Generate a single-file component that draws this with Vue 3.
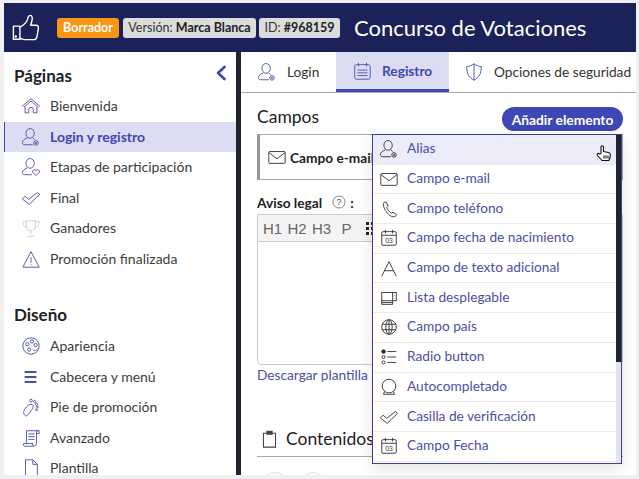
<script setup>
const pages = [
  { t: 'Bienvenida', i: 'home' },
  { t: 'Login y registro', i: 'user', active: true },
  { t: 'Etapas de participación', i: 'userh' },
  { t: 'Final', i: 'check' },
  { t: 'Ganadores', i: 'trophy' },
  { t: 'Promoción finalizada', i: 'warn' }
]
const design = [
  { t: 'Apariencia', i: 'palette' },
  { t: 'Cabecera y menú', i: 'menu' },
  { t: 'Pie de promoción', i: 'foot' },
  { t: 'Avanzado', i: 'scroll' },
  { t: 'Plantilla', i: 'file' }
]
const menu = [
  { t: 'Alias', i: 'user', hover: true },
  { t: 'Campo e-mail', i: 'mail' },
  { t: 'Campo teléfono', i: 'phone' },
  { t: 'Campo fecha de nacimiento', i: 'cal' },
  { t: 'Campo de texto adicional', i: 'text' },
  { t: 'Lista desplegable', i: 'select' },
  { t: 'Campo país', i: 'globe' },
  { t: 'Radio button', i: 'radio' },
  { t: 'Autocompletado', i: 'ball' },
  { t: 'Casilla de verificación', i: 'check' },
  { t: 'Campo Fecha', i: 'cal' }
]
const paths = {
  home: '<path d="M1 11.500L11 3l10 8.500M3 12.500L11 5.500l8 7"/><path d="M4.500 12v6.500H8.500V15a2.500 2.500 0 0 1 5 0v3.500h4V12"/>',
  user: '<ellipse cx="10" cy="7" rx="4.600" ry="5.300"/><path d="M7 12c-3 1-5.500 3-5.500 5 0 1.500 1 2.500 2.500 2.500h9"/><path d="M13 12l2 2"/><circle cx="16.500" cy="17.500" r="2.500"/><circle cx="16.500" cy="17.500" r=".8"/>',
  userh: '<ellipse cx="10" cy="7" rx="4.600" ry="5.300"/><path d="M7 12c-3 1-5.500 3-5.500 5 0 1.500 1 2.500 2.500 2.500h8"/><path d="M16.500 20.500l-3.500-3.500a1.600 1.600 0 0 1 3.500-2 1.600 1.600 0 0 1 3.500 2z"/>',
  check: '<path d="M1.500 12l3-3 4 3.500L18 5l2.500 2L9 18z"/>',
  trophy: '<path d="M6 3h10v6a5 5 0 0 1-10 0z"/><path d="M6 4H2c0 4 2 6 5 7M16 4h4c0 4-2 6-5 7M11 14v4M7 20h8"/>',
  warn: '<path d="M11 3L2 20h18z"/><path d="M11 9v6M11 17v1"/>',
  palette: '<circle cx="11" cy="11" r="9"/><circle cx="7" cy="9" r="1.800"/><circle cx="12" cy="6" r="1.800"/><circle cx="16" cy="10" r="1.800"/><circle cx="9" cy="15" r="1.800"/><path d="M13 15c2 2 4 1 5-1"/>',
  menu: '<path d="M4 5.500h13M4 11h13M4 16.500h13" stroke-width="2"/>',
  foot: '<path d="M4 20c-2-2-1-6 2-9 2-2 3-3 5-3 3 0 3 3 1 6-2 2-3 5-5 6-1 1-2 1-3 0z"/><circle cx="11" cy="4" r="1.500"/><circle cx="15" cy="5" r="1.200"/><circle cx="17" cy="8" r="1.200"/><circle cx="18" cy="11" r="1"/><circle cx="17" cy="14" r="1"/>',
  scroll: '<path d="M6 17V3h13"/><path d="M17 3v14a3 3 0 0 1-3 3H4a2 2 0 0 1-1-3h10a2 2 0 0 0 1 3"/><path d="M8 6.500h7M8 9.500h7M8 12.500h7"/><path d="M17 3h3v3h-3"/>',
  file: '<path d="M5 2h8l5 5v15H5z"/><path d="M13 2v5h5"/>',
  mail: '<rect x="2" y="5" width="18" height="13" rx="1"/><path d="M2 6l9 7 9-7"/>',
  phone: '<path d="M6 3.500C4 4.500 4.500 8 7 12.500c3 4.500 6.500 7.500 10 7 1.500-.3 2.500-1.500 2-2.500l-3.500-2.500-2 1c-2-1-4-3.500-5-6l1.500-1.500L8 3.500z"/>',
  cal: '<rect x="3" y="4" width="16" height="15" rx="1.500"/><path d="M3 8h16M7 2v4M15 2v4"/><text x="11" y="16.500" text-anchor="middle" font-size="7.500" fill="#333" stroke="none" font-family="Liberation Sans">03</text>',
  text: '<path d="M3 20L11 4l8 16M6 14h10"/>',
  select: '<rect x="3" y="5" width="16" height="9"/><path d="M3 14v4h12v-4M15 5v9M3 16h12M17 8v.5M17 11v.5"/>',
  globe: '<circle cx="11" cy="11" r="8"/><ellipse cx="11" cy="11" rx="3.500" ry="8"/><path d="M11 3v16M3.500 8h15M3.500 14h15"/>',
  radio: '<circle cx="5" cy="5" r="2" fill="#222"/><circle cx="5" cy="11" r="1.700"/><circle cx="5" cy="17" r="1.700"/><path d="M9 5h10M9 11h10M9 17h10"/>',
  ball: '<circle cx="11" cy="10" r="7.500"/><path d="M6 16l-1 3h12l-1-3"/>',
  clip: '<path d="M4 5h14v16H4z"/><path d="M8 6V2.500h6V6z" fill="#444"/>',
  shield: '<path d="M11 2c3 2 5 3 8 3 0 7-2 12-8 15C5 17 3 12 3 5c3 0 5-1 8-3z"/><path d="M11 2v18"/>',
  list: '<rect x="3" y="4" width="17" height="16" rx="2"/><path d="M7 2v4M16 2v4M6 10h11M6 13h11M6 16h11"/>',
  help: '<circle cx="11" cy="11" r="9.500"/><text x="11" y="16" text-anchor="middle" font-size="14" fill="#444" stroke="none" font-family="Liberation Sans">?</text>'
}
</script>

<template>
  <div class="page">
    <header class="top">
      <svg class="logo" viewBox="0 0 30 30" fill="none" stroke="#fff" stroke-width="1.500" stroke-linejoin="round" stroke-linecap="round">
        <path d="M1.500 13h7v14h-7z" />
        <circle cx="4" cy="24" r=".6" fill="#fff" />
        <path d="M8.500 14c4-2 7-5 8-8 .6-2 1-4.500 3-4.500 2.200 0 2.700 3 1.800 6L20 12h5.500c2.500 0 3 1.500 2.700 4l-1.500 8.500c-.4 2-1.500 3-3.500 3H14c-2.500 0-3.500-1-5.500-1.500" />
      </svg>
      <span class="badge orange">Borrador</span>
      <span class="badge grey ver">Versión: <b>Marca Blanca</b></span>
      <span class="badge grey idb">ID: <b>#968159</b></span>
      <h1>Concurso de Votaciones</h1>
    </header>

    <div class="body">
      <aside class="side">
        <div class="side-head">
          <h2>Páginas</h2>
          <svg class="chev" viewBox="0 0 12 16" fill="none" stroke="#3f47b5" stroke-width="2.600" stroke-linecap="round" stroke-linejoin="round"><path d="M9.500 2L3 8l6.500 6" /></svg>
        </div>
        <ul class="nav">
          <li v-for="p in pages" :key="p.t" :class="{ on: p.active, dim: p.i === 'trophy' }">
            <svg viewBox="0 0 22 22" v-html="paths[p.i]"></svg>
            <span>{{ p.t }}</span>
          </li>
        </ul>
        <h2 class="second">Diseño</h2>
        <ul class="nav">
          <li v-for="p in design" :key="p.t">
            <svg viewBox="0 0 22 22" v-html="paths[p.i]"></svg>
            <span>{{ p.t }}</span>
          </li>
        </ul>
      </aside>

      <main class="main">
        <nav class="tabs">
          <div class="tab">
            <svg viewBox="0 0 22 22" v-html="paths.user"></svg><span>Login</span>
          </div>
          <div class="tab sel">
            <svg viewBox="0 0 22 22" v-html="paths.list"></svg><span>Registro</span>
          </div>
          <div class="tab">
            <svg viewBox="0 0 22 22" v-html="paths.shield"></svg><span>Opciones de seguridad</span>
          </div>
        </nav>

        <div class="content">
          <div class="row-head">
            <h3>Campos</h3>
            <button class="add">Añadir elemento</button>
          </div>
          <div class="field">
            <svg viewBox="0 0 22 22" v-html="paths.mail"></svg><b>Campo e-mail</b>
          </div>
          <div class="legal">
            <b>Aviso legal</b>
            <svg viewBox="0 0 22 22" v-html="paths.help"></svg>
            <b>:</b>
          </div>
          <div class="editor">
            <div class="toolbar">
              <span class="h">H1</span><span class="h">H2</span><span class="h">H3</span><span class="p">P</span>
              <span class="dots"><i></i><i></i><i></i><i></i><i></i><i></i></span>
            </div>
          </div>
          <a class="dl">Descargar plantilla</a>
          <div class="cont-head">
            <svg viewBox="0 0 22 22" v-html="paths.clip"></svg>
            <span>Contenidos</span>
          </div>
          <div class="circles"><i></i><i></i></div>
        </div>
      </main>

      <div class="drop">
        <ul class="drop-list">
          <li v-for="m in menu" :key="m.t" :class="{ hover: m.hover }">
            <svg viewBox="0 0 22 22" v-html="paths[m.i]"></svg>
            <span>{{ m.t }}</span>
          </li>
        </ul>
        <div class="track"><div class="thumb"></div></div>
        <svg class="hand" viewBox="0 0 16 18" fill="#fff" stroke="#111" stroke-width="1.100" stroke-linejoin="round">
          <path d="M5 9V2.500a1.200 1.200 0 0 1 2.400 0V7l5 1c1.500.3 2 1 2 2.500 0 2-.5 3.500-1.500 5.500H6L1.500 11c-1-1.500.5-2.800 2-1.500z" />
          <path d="M8 11v3M10 11v3M12 11v3" fill="none" />
        </svg>
      </div>
    </div>
  </div>
</template>

<style>
html, body { margin: 0; background: #f0f0f1; overflow: hidden; }
</style>

<style scoped>
* { box-sizing: border-box; }
.page {
  width: 639px; height: 479px; padding: 3px 3px 4px 4px;
  font-family: Lato, "Noto Sans", sans-serif;
  display: flex; flex-direction: column; overflow: hidden; color: #333;
}
.top {
  height: 49px; flex: none; background: #1a2259; display: flex; align-items: center; padding-left: 8px;
}
.logo { width: 28px; height: 28px; margin-right: 17px; }
.badge {
  height: 20px; border-radius: 3px; font-size: 12.500px; line-height: 20px; margin-right: 3px; white-space: nowrap; text-align: center;
}
.orange { background: #fb9514; color: #fff; font-weight: 700; width: 62px; margin-right: 4px; }
.grey { background: #dcdcdc; color: #333; }
.ver { width: 133px; }
.idb { width: 81px; }
.grey b { color: #222; }
h1 { margin: 0 0 0 11px; font-size: 22px; font-weight: 400; color: #fff; white-space: nowrap; }

.body { flex: 1; min-height: 0; display: flex; position: relative; background: #fff; }
.side { width: 237px; flex: none; background: #fff; border-right: 5px solid #20222e; padding-top: 11px; overflow: hidden; }
.side-head { display: flex; justify-content: space-between; align-items: center; padding: 0 9px 0 10px; height: 24px; }
h2 { margin: 0; font-size: 17px; font-weight: 700; color: #222; }
.second { margin: 29px 0 0 10px; line-height: 24px; }
.chev { width: 12px; height: 16px; margin-top: -4px; }
.nav { list-style: none; margin: 4px 0 0; padding: 0; }
.nav li { height: 30.500px; display: flex; align-items: center; padding-left: 17px; font-size: 14px; color: #3c3c3c; }
.nav li span { margin-top: -1px; }
.second + .nav li { height: 30.500px; }
.nav li svg { width: 20px; height: 20px; margin-right: 9px; fill: none; stroke: #4a50a8; stroke-width: 1; flex: none; }
.nav li.on { background: #dcdcf3; color: #3f47b5; font-weight: 700; box-shadow: inset 1px 0 #3f47b5; }
.nav li.dim svg { stroke: #c9cbe9; }

.main { flex: 1; min-width: 0; display: flex; flex-direction: column; overflow: hidden; }
.tabs { height: 41px; flex: none; display: flex; border-bottom: 1px solid #aaa; font-size: 13.700px; color: #333; }
.tab { display: flex; align-items: center; height: 40px; padding: 0 0 0 16px; white-space: nowrap; }
.tab span { margin-top: -2px; }
.tab svg { width: 20px; height: 20px; margin-right: 10px; fill: none; stroke: #4a50a8; stroke-width: 1; }
.tab:first-child { width: 95px; }
.tab.sel { width: 113px; padding-left: 16px; background: #dcdcf3; color: #3f47b5; font-weight: 700; border-bottom: 3px solid #3f47b5; }
.tab.sel span { margin-top: 0; }
.tab:last-child { padding-left: 15px; }

.content { padding: 0 13px 0 16px; flex: 1; }
.row-head { display: flex; justify-content: space-between; align-items: center; height: 41px; padding-top: 14px; padding-bottom: 3px; }
h3 { margin: -5px 0 0; font-size: 17.500px; font-weight: 400; color: #222; }
.add { margin: 0; height: 24px; width: 121px; border: 0; border-radius: 12px; background: #3f47b5; color: #fff; font: 700 13.800px Lato, sans-serif; padding: 0; }
.field { height: 46px; border: 1px solid #aaa; border-left: 3px solid #999; display: flex; align-items: center; padding-left: 7px; font-size: 13.700px; color: #222; white-space: nowrap; }
.field svg { width: 20px; height: 20px; margin-right: 3px; fill: none; stroke: #333; stroke-width: 1; flex: none; }
.legal { display: flex; align-items: center; height: 20px; margin-top: 12px; font-size: 13.700px; color: #222; }
.legal svg { width: 14px; height: 14px; margin: 0 4px 0 10px; fill: none; stroke: #444; stroke-width: 1; }
.editor { height: 151px; margin-top: 2px; border: 1px solid #ccc; border-radius: 0 0 4px 4px; }
.toolbar { height: 27px; background: #f4f4f4; border-bottom: 1px solid #ccc; display: flex; align-items: center; padding-left: 5px; font-size: 15px; color: #666; font-family: "Liberation Sans", sans-serif; }
.toolbar .h { width: 24.500px; }
.toolbar .p { width: 24px; margin-left: 5px; }
.dots { display: grid; grid-template-columns: 3px 3px; gap: 2px; }
.dots i { width: 3px; height: 3px; background: #222; }
.dl { display: block; margin-top: 1px; font-size: 13.700px; color: #4a50a8; line-height: 17px; }
.cont-head { margin-top: 41px; height: 33px; display: flex; align-items: center; border-bottom: 1px solid #aaa; font-size: 17.500px; color: #222; padding-bottom: 4px; }
.cont-head svg { width: 19px; height: 19px; margin: 0 7px 0 3px; fill: none; stroke: #444; stroke-width: 1.200; flex: none; }
.circles { display: flex; gap: 12px; margin: 15px 0 0 5px; }
.circles i { width: 26px; height: 26px; border: 1px solid #ddd; border-radius: 50%; flex: none; }

.drop {
  position: absolute; left: 368px; top: 82px; width: 250px; height: 330px;
  border: 1px solid #3a3f9a; background: #fff; box-shadow: 0 4px 14px rgba(0,0,0,.12); display: flex;
}
.drop-list { list-style: none; margin: 0; padding: 0; flex: 1; min-width: 0; }
.drop-list li { height: 29.700px; display: flex; align-items: center; padding-left: 6px; border-bottom: 1px solid #ececec; font-size: 13.700px; color: #4a50a8; white-space: nowrap; }
.drop-list li.hover { background: #ebebf9; }
.drop-list li span { margin-top: -3px; }
.drop-list svg { width: 20px; height: 20px; margin-right: 8px; fill: none; stroke: #333; stroke-width: 1; flex: none; }
.track { width: 5px; background: #e4e4ee; flex: none; }
.thumb { height: 227px; background: #20222e; }
.hand { position: absolute; left: 223px; top: 9px; width: 16px; height: 19px; }
</style>
